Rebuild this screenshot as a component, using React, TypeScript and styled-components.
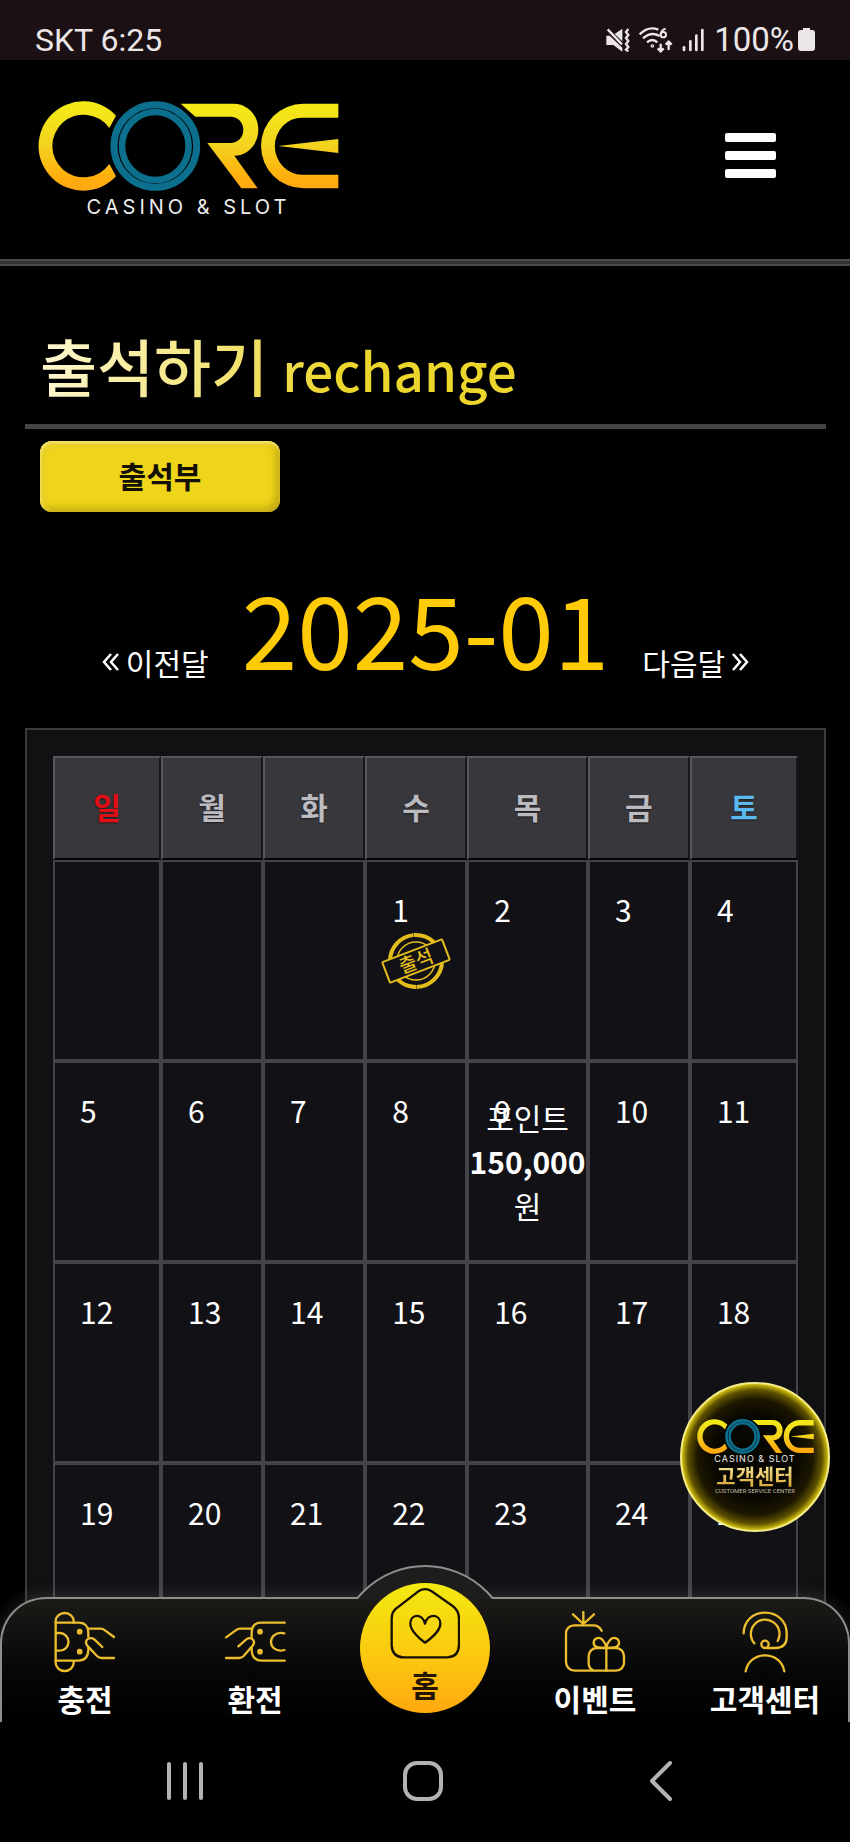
import React, { useId } from "react";
import styled, { createGlobalStyle } from "styled-components";

const KR = `"Noto Sans CJK KR", "Noto Sans", sans-serif`;

const GlobalStyle = createGlobalStyle`
  *, *::before, *::after { box-sizing: border-box; }
  html, body, #root { height: 100%; }
  body {
    margin: 0;
    background: #000;
    color: #fff;
    font-family: ${KR};
    font-size: 30px;
    line-height: 44px;
  }
  a { color: inherit; text-decoration: none; }
  button { font: inherit; color: inherit; background: none; border: 0; padding: 0; cursor: pointer; }
`;

const Screen = styled.div`
  display: flex;
  flex-direction: column;
  height: 100vh;
  overflow: hidden;
`;

/* ---------- phone status bar ---------- */

const StatusBar = styled.div`
  flex: none;
  display: flex;
  align-items: center;
  justify-content: space-between;
  height: 60px;
  padding: 20px 35px 0;
  background: #1b1114;
  color: #ece6e8;
  font-family: Roboto, sans-serif;
  font-size: 32px;
  line-height: 40px;
`;

const StatusIcons = styled.div`
  display: flex;
  align-items: center;
  gap: 9px;
`;

const Battery = styled.span`
  display: flex;
  align-items: center;
  gap: 4px;
  font-size: 33px;
`;

/* ---------- app viewport ---------- */

const Viewport = styled.div`
  position: relative;
  flex: 1;
  min-height: 0;
`;

const Scroller = styled.div`
  height: 100%;
  overflow-y: auto;
  scrollbar-width: none;
  padding-bottom: 160px;
  &::-webkit-scrollbar { display: none; }
`;

const Header = styled.header`
  display: flex;
  align-items: center;
  justify-content: space-between;
  height: 199px;
  padding: 0 74px 0 38px;
`;

const HeaderRule = styled.div`
  height: 7px;
  border: solid #4a4a4a;
  border-width: 2px 0;
  background: #333;
`;

const LogoLink = styled.a`
  display: flex;
  flex-direction: column;
  align-items: center;
  padding-top: 4px;
`;

const LogoCaption = styled.span<{ $small?: boolean }>`
  color: #ececec;
  font-family: Inter, sans-serif;
  font-weight: 400;
  font-size: ${(p) => (p.$small ? 9 : 20)}px;
  line-height: ${(p) => (p.$small ? 9 : 32)}px;
  letter-spacing: ${(p) => (p.$small ? 1 : 4)}px;
  white-space: nowrap;
`;

const MenuButton = styled.button`
  display: grid;
  gap: 9px;
  width: 51px;
  margin-bottom: 8px;
`;

const MenuBar = styled.span`
  height: 9px;
  border-radius: 2px;
  background: #fff;
`;

const Content = styled.main`
  padding: 53px 24px 0 25px;
`;

const Title = styled.h1`
  margin: 0;
  padding: 0 15px 13px;
  border-bottom: 5px solid #444;
  font-size: 62px;
  font-weight: 500;
  line-height: 92px;
`;

const TitleText = styled.span`
  background: linear-gradient(100deg, #fff8d4 0%, #f2e372 40%, #ecd62c 62%, #ecd62c 100%);
  background-clip: text;
  -webkit-background-clip: text;
  color: transparent;
`;

const TitleSub = styled.small`
  font-size: 53px;
  line-height: 60px;
`;

const TabButton = styled.button`
  display: block;
  width: 240px;
  height: 71px;
  margin: 12px 15px 0;
  padding-bottom: 4px;
  border-radius: 12px;
  background: #eed51a;
  box-shadow: inset 1px 2px 3px #f9e577, inset 4px 4px 8px #e8d030, inset -3px -3px 10px #b89d0e;
  color: #141005;
  font-weight: 700;
`;

const MonthNav = styled.nav`
  display: flex;
  align-items: flex-end;
  justify-content: center;
  gap: 33px;
  margin-top: 55px;
`;

const MonthLink = styled.a`
  display: flex;
  align-items: center;
  gap: 7px;
  margin-bottom: 3px;
`;

const MonthLabel = styled.h2`
  margin: 0;
  color: #ffcb08;
  font-size: 100px;
  font-weight: 400;
  line-height: 120px;
`;

/* ---------- calendar ---------- */

const CalendarFrame = styled.section`
  margin-top: 41px;
  padding: 26px;
  border: 2px solid #3c3c3e;
  background: #111113;
`;

const Calendar = styled.table`
  width: 100%;
  table-layout: fixed;
  border-collapse: separate;
  border-spacing: 0;
`;

const Col = styled.col<{ $width: string }>`
  width: ${(p) => p.$width};
`;

const WeekHead = styled.th<{ $tone: string }>`
  height: 104px;
  padding: 0 0 4px;
  border: 2px solid;
  border-color: #57575b #17171a #050506 #57575b;
  background: #38373c;
  color: ${(p) => p.$tone};
  font-weight: 700;
  text-shadow: 0 1px 2px rgba(0, 0, 0, 0.5);
`;

const DayCell = styled.td`
  position: relative;
  height: 201px;
  padding: 0;
  border: 2px solid #444347;
  background: #121116;
  text-align: center;
  vertical-align: middle;
`;

const DayNumber = styled.span`
  position: absolute;
  top: 25px;
  left: 25px;
`;

const Reward = styled.span`
  display: grid;
  justify-items: center;
  padding-bottom: 2px;
  white-space: nowrap;
`;

const StampSvg = styled.svg`
  display: block;
  margin: 0 auto;
`;

/* ---------- floating service badge ---------- */

const ServiceBadge = styled.a`
  position: absolute;
  right: 20px;
  bottom: 190px;
  display: flex;
  flex-direction: column;
  align-items: center;
  width: 150px;
  height: 150px;
  padding-top: 35px;
  border-radius: 50%;
  border: 2px solid #f3ea8a;
  background: radial-gradient(circle, #080600 40%, #1d1700 56%, #5f5200 65%, #d8c410 71%);
`;

const BadgeTitle = styled.strong`
  background: linear-gradient(#f6eaa0, #d9a637);
  background-clip: text;
  -webkit-background-clip: text;
  color: transparent;
  font-size: 21px;
  line-height: 24px;
`;

const BadgeNote = styled.span`
  color: #c5bea8;
  font-family: Roboto, sans-serif;
  font-size: 6px;
  line-height: 8px;
  white-space: nowrap;
`;

/* ---------- bottom tab bar ---------- */

const TabBar = styled.nav`
  position: absolute;
  left: 0;
  right: 0;
  bottom: 0;
  height: 125px;
  border: 2px solid #8d8d8b;
  border-bottom: 0;
  border-radius: 46px 46px 0 0;
  background: linear-gradient(#1c1b18, #060606 60%, #000);
  box-shadow: 0 0 18px rgba(150, 150, 150, 0.25);
`;

const TabRow = styled.div`
  display: grid;
  grid-template-columns: repeat(5, 1fr);
  margin: 0 -2px;
`;

const Bump = styled.span`
  position: absolute;
  top: -34px;
  left: 50%;
  width: 138px;
  height: 34px;
  margin-left: -69px;
  overflow: hidden;
  &::before {
    content: "";
    position: absolute;
    top: 0;
    left: -19px;
    width: 176px;
    height: 176px;
    border: 2px solid #8d8d8b;
    border-radius: 50%;
    background: #1d1d1c;
  }
`;

const TabItem = styled.a`
  display: flex;
  flex-direction: column;
  align-items: center;
  gap: 3px;
  padding-top: 12px;
  font-weight: 700;
  white-space: nowrap;
`;

const HomeItem = styled.a`
  position: relative;
  display: flex;
  flex-direction: column;
  align-items: center;
  gap: 3px;
  justify-self: center;
  width: 130px;
  height: 130px;
  margin-top: -16px;
  padding-top: 4px;
  border-radius: 50%;
  background: linear-gradient(#f2ea10, #fbc90f 55%, #ffa80f);
  color: #241503;
  font-weight: 700;
`;

/* ---------- phone navigation keys ---------- */

const SystemBar = styled.footer`
  position: relative;
  flex: none;
  display: flex;
  align-items: center;
  justify-content: space-between;
  height: 120px;
  padding: 0 149px 3px 145px;
  background: #000;
`;

const SystemKey = styled.button`
  display: grid;
  place-items: center;
  width: 80px;
  height: 60px;
`;

/* ---------- drawings ---------- */

function CoreLogo({ width, height }: { width: number; height: number }) {
  const id = useId();
  const fill = `url(#${id})`;
  return (
    <svg width={width} height={height} viewBox="113 301 903 270" aria-label="CORE" role="img">
      <defs>
        <linearGradient id={id} gradientUnits="userSpaceOnUse" x1="0" y1="301" x2="0" y2="570">
          <stop offset="0" stopColor="#f4ec16" />
          <stop offset="0.5" stopColor="#f3d31f" />
          <stop offset="0.85" stopColor="#ffae0c" />
          <stop offset="1" stopColor="#ffa814" />
        </linearGradient>
      </defs>
      <path fill={fill} d="M347 345A134 134 0 1 0 347 527L327 490A94 94 0 1 1 327 382Z" />
      <g fill="none" stroke="#0b6f8d">
        <ellipse cx="465" cy="436" rx="124" ry="124" strokeWidth="21" />
        <ellipse cx="465" cy="436" rx="100" ry="102" strokeWidth="20" />
      </g>
      <path
        fill={fill}
        d="M541 309H700C742 309 774 344 774 387C774 430 742 465 702 465L772 563H723L621 427H690C713 427 729 409 729 387C729 365 713 348 690 348H585Z"
      />
      <path fill={fill} d="M1014 309H909A127 127 0 0 0 909 563H1014V522H905A81 85 0 0 1 905 351H1014Z" />
      <path fill={fill} d="M834 436L1014 415V457Z" />
    </svg>
  );
}

function MuteIcon() {
  return (
    <svg width="24" height="24" viewBox="540 83 72 72" fill="#ece6e8" aria-hidden="true">
      <path d="M566 101L589 85V123ZM541 106H551L589 142V154L562 134H541Z" />
      <path d="M545 87L588 132" stroke="#ece6e8" strokeWidth="7" />
      <path d="M607 86L600 95L607 104L600 113L607 122L600 131L607 140L600 148L607 153" fill="none" stroke="#ece6e8" strokeWidth="7" />
    </svg>
  );
}

function WifiIcon() {
  return (
    <svg width="34" height="26" viewBox="640 82 102 78" fill="none" stroke="#ece6e8" strokeWidth="7" aria-hidden="true">
      <path d="M642 104Q668 78 698 90M652 116Q676 94 702 109M664 128Q680 114 695 128" />
      <circle cx="680" cy="139" r="2" />
      <path d="M720 87Q706 92 705 104" strokeWidth="6" />
      <circle cx="713" cy="105" r="8" strokeWidth="6" />
      <path d="M705 132V154M696 146L705 155L714 146M729 151V127M720 135L729 126L738 135" />
    </svg>
  );
}

function SignalIcon() {
  return (
    <svg width="23" height="24" viewBox="761 84 69 72" stroke="#ece6e8" strokeWidth="8" strokeLinecap="round" aria-hidden="true">
      <path d="M767 142V150" />
      <path d="M786 124V150" />
      <path d="M804 107V150" />
      <path d="M822 90V150" />
    </svg>
  );
}

function BatteryIcon() {
  return (
    <svg width="17" height="24" viewBox="0 0 17 24" fill="#ece6e8" aria-hidden="true">
      <path d="M5 0H12V2H14Q17 2 17 5V20Q17 23 14 23H3Q0 23 0 20V5Q0 2 3 2H5Z" />
    </svg>
  );
}

function Chevrons({ flip }: { flip?: boolean }) {
  return (
    <svg width="17" height="20" viewBox="0 0 17 20" fill="none" stroke="#fff" strokeWidth="2.5" aria-hidden="true">
      <path d={flip ? "M1 2L8 10L1 18M8 2L15 10L8 18" : "M9 2L2 10L9 18M16 2L9 10L16 18"} />
    </svg>
  );
}

function Stamp() {
  return (
    <StampSvg width="72" height="58" viewBox="-36 -29 72 58" role="img" aria-label="출석">
      <g fill="none" stroke="#e3bd1b">
        <circle r="26" strokeWidth="4" strokeDasharray="40 0.5 27 0.5 51 0.5" />
        <circle r="19" strokeWidth="1.5" />
      </g>
      <g transform="rotate(-21)">
        <rect x="-32" y="-11" width="64" height="22" rx="1" fill="#121116" stroke="#e3bd1b" strokeWidth="2" />
        <text x="0" y="7" textAnchor="middle" fontFamily={KR} fontSize="19" fontWeight="500" fill="#e3bd1b">
          출석
        </text>
      </g>
    </StampSvg>
  );
}

type IconProps = { viewBox: string; children: React.ReactNode };

function TabIcon({ viewBox, children }: IconProps) {
  return (
    <svg width="62" height="62" viewBox={viewBox} fill="none" stroke="#ecbe2f" strokeWidth="7" strokeLinecap="round" strokeLinejoin="round" aria-hidden="true">
      {children}
    </svg>
  );
}

const depositIcon = (
  <TabIcon viewBox="163 183 186 186">
    <path d="M168 338V214A27 25 0 0 1 222 214V218M168 338A27 25 0 0 0 222 338V334" />
    <path d="M168 218H238Q266 219 266 248V260M168 332H236Q265 331 266 300V294" />
    <path d="M170 249H180A26 26 0 0 1 180 302H170" />
    <circle cx="240" cy="245" r="5" fill="#ecbe2f" />
    <circle cx="240" cy="305" r="5" fill="#ecbe2f" />
    <path d="M266 236H302Q310 236 316 241L343 261M308 291L284 268Q274 261 264 267Q255 275 262 286L292 318Q298 324 306 324H343" />
  </TabIcon>
);

const exchangeIcon = (
  <TabIcon viewBox="673 183 186 186">
    <path d="M855 218H784Q756 219 756 248V260M855 332H786Q757 331 756 300V294" />
    <path d="M854 250Q836 245 823 256Q814 264 814 276Q814 288 823 295Q836 305 854 300" />
    <circle cx="781" cy="245" r="5" fill="#ecbe2f" />
    <circle cx="781" cy="305" r="5" fill="#ecbe2f" />
    <path d="M756 236H722Q714 236 708 241L679 262M716 289L740 268Q750 261 758 267Q767 275 760 286L732 318Q726 324 718 324H679" />
  </TabIcon>
);

const eventIcon = (
  <TabIcon viewBox="434 183 186 186">
    <path d="M547 242Q539 226 522 226H464A24 24 0 0 0 440 250V336A26 26 0 0 0 466 362H590A24 24 0 0 0 614 338V318A24 24 0 0 0 590 294H532A24 24 0 0 0 508 318V340Q508 356 522 361" />
    <path d="M561 294V362M561 293Q523 296 523 279C523 262 543 260 550 270Q558 278 561 293Q564 278 572 270C579 260 599 262 599 279Q599 296 561 293" />
    <path d="M492 186V222M461 193L492 222L524 193" />
  </TabIcon>
);

const serviceIcon = (
  <TabIcon viewBox="944 183 186 186">
    <path d="M973 250C973 214 1000 188 1037 188C1074 188 1102 214 1102 250V262Q1102 294 1068 294H1042" />
    <path d="M1005 280A43 43 0 1 1 1075 273" />
    <circle cx="1037" cy="283" r="11" />
    <path d="M979 364C984 335 1008 316 1037 316C1066 316 1090 335 1095 364" />
  </TabIcon>
);

function HomeIcon() {
  return (
    <svg width="70" height="72" viewBox="1170 110 210 216" fill="none" stroke="#171003" strokeWidth="7" strokeLinejoin="round" aria-hidden="true">
      <path d="M1175 205Q1175 183 1193 171L1255 123Q1275 110 1295 123L1357 166Q1377 180 1377 205V285Q1375 321 1341 321H1211Q1177 321 1175 285Z" />
      <path d="M1275 277C1262 268 1231 242 1231 220C1231 190 1267 188 1275 220C1283 188 1321 190 1321 220C1321 242 1288 268 1275 277Z" />
    </svg>
  );
}

/* ---------- data ---------- */

const weekdays = [
  { label: "일", tone: "#e30d14", width: "14.5%" },
  { label: "월", tone: "#bcbbc0", width: "13.7%" },
  { label: "화", tone: "#bcbbc0", width: "13.7%" },
  { label: "수", tone: "#bcbbc0", width: "13.7%" },
  { label: "목", tone: "#bcbbc0", width: "16.2%" },
  { label: "금", tone: "#bcbbc0", width: "13.7%" },
  { label: "토", tone: "#5ab9ee", width: "14.5%" },
];

const FIRST_WEEKDAY = 3;
const DAYS = 31;
const weeks = Array.from({ length: 5 }, (_, w) =>
  Array.from({ length: 7 }, (_, d) => {
    const day = w * 7 + d - FIRST_WEEKDAY + 1;
    return day >= 1 && day <= DAYS ? day : null;
  })
);

export default function App() {
  return (
    <>
      <GlobalStyle />
      <Screen>
        <StatusBar>
          <span>SKT 6:25</span>
          <StatusIcons>
            <MuteIcon />
            <WifiIcon />
            <SignalIcon />
            <Battery>
              100%
              <BatteryIcon />
            </Battery>
          </StatusIcons>
        </StatusBar>

        <Viewport>
          <Scroller>
            <Header>
              <LogoLink href="#">
                <CoreLogo width={301} height={90} />
                <LogoCaption>CASINO &amp; SLOT</LogoCaption>
              </LogoLink>
              <MenuButton type="button" aria-label="메뉴">
                <MenuBar />
                <MenuBar />
                <MenuBar />
              </MenuButton>
            </Header>
            <HeaderRule />

            <Content>
              <Title>
                <TitleText>
                  출석하기 <TitleSub>rechange</TitleSub>
                </TitleText>
              </Title>
              <TabButton type="button">출석부</TabButton>

              <MonthNav>
                <MonthLink href="#prev">
                  <Chevrons />
                  이전달
                </MonthLink>
                <MonthLabel>2025-01</MonthLabel>
                <MonthLink href="#next">
                  다음달
                  <Chevrons flip />
                </MonthLink>
              </MonthNav>

              <CalendarFrame>
                <Calendar>
                  <colgroup>
                    {weekdays.map((d) => (
                      <Col key={d.label} $width={d.width} />
                    ))}
                  </colgroup>
                  <thead>
                    <tr>
                      {weekdays.map((d) => (
                        <WeekHead key={d.label} scope="col" $tone={d.tone}>
                          {d.label}
                        </WeekHead>
                      ))}
                    </tr>
                  </thead>
                  <tbody>
                    {weeks.map((week, w) => (
                      <tr key={w}>
                        {week.map((day, d) => (
                          <DayCell key={d}>
                            {day && <DayNumber>{day}</DayNumber>}
                            {day === 1 && <Stamp />}
                            {day === 9 && (
                              <Reward>
                                <span>포인트</span>
                                <strong>150,000</strong>
                                <span>원</span>
                              </Reward>
                            )}
                          </DayCell>
                        ))}
                      </tr>
                    ))}
                  </tbody>
                </Calendar>
              </CalendarFrame>
            </Content>
          </Scroller>

          <ServiceBadge href="#service">
            <CoreLogo width={117} height={35} />
            <LogoCaption $small>CASINO &amp; SLOT</LogoCaption>
            <BadgeTitle>고객센터</BadgeTitle>
            <BadgeNote>CUSTOMER SERVICE CENTER</BadgeNote>
          </ServiceBadge>

          <TabBar>
            <Bump />
            <TabRow>
              <TabItem href="#deposit">
                {depositIcon}
                충전
              </TabItem>
              <TabItem href="#exchange">
                {exchangeIcon}
                환전
              </TabItem>
              <HomeItem href="#home">
                <HomeIcon />
                홈
              </HomeItem>
              <TabItem href="#event">
                {eventIcon}
                이벤트
              </TabItem>
              <TabItem href="#service">
                {serviceIcon}
                고객센터
              </TabItem>
            </TabRow>
          </TabBar>
        </Viewport>

        <SystemBar>
          <SystemKey type="button" aria-label="최근 앱">
            <svg width="36" height="40" viewBox="0 0 36 40" stroke="#b4b2b3" strokeWidth="4" strokeLinecap="round">
              <path d="M2 3V37M18 3V37M34 3V37" />
            </svg>
          </SystemKey>
          <SystemKey type="button" aria-label="홈 화면">
            <svg width="40" height="40" viewBox="0 0 40 40" fill="none" stroke="#b4b2b3" strokeWidth="4">
              <rect x="2" y="2" width="36" height="36" rx="12" />
            </svg>
          </SystemKey>
          <SystemKey type="button" aria-label="뒤로">
            <svg width="24" height="42" viewBox="0 0 24 42" fill="none" stroke="#b4b2b3" strokeWidth="4" strokeLinecap="round" strokeLinejoin="round">
              <path d="M21 3L3 21L21 39" />
            </svg>
          </SystemKey>
        </SystemBar>
      </Screen>
    </>
  );
}
